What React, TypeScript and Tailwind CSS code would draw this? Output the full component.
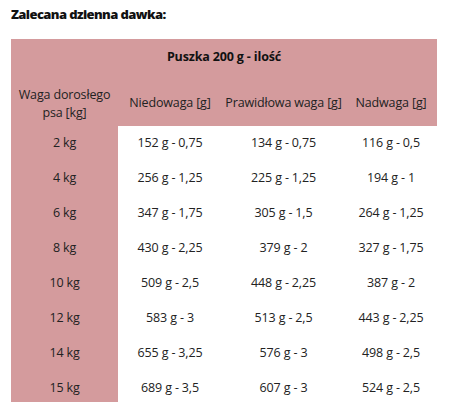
import React from 'react';

const rows: [string, string, string, string][] = [
  ['2 kg', '152 g - 0,75', '134 g - 0,75', '116 g - 0,5'],
  ['4 kg', '256 g - 1,25', '225 g - 1,25', '194 g - 1'],
  ['6 kg', '347 g - 1,75', '305 g - 1,5', '264 g - 1,25'],
  ['8 kg', '430 g - 2,25', '379 g - 2', '327 g - 1,75'],
  ['10 kg', '509 g - 2,5', '448 g - 2,25', '387 g - 2'],
  ['12 kg', '583 g - 3', '513 g - 2,5', '443 g - 2,25'],
  ['14 kg', '655 g - 3,25', '576 g - 3', '498 g - 2,5'],
  ['15 kg', '689 g - 3,5', '607 g - 3', '524 g - 2,5'],
];

export default function App() {
  return (
    <div className="w-[450px] h-[402px] overflow-hidden bg-white pl-[11px] pt-[6px] text-[#222] font-['Open_Sans',sans-serif]">
      <h2 className="text-[13px] leading-[16px] font-black text-[#111] tracking-[-0.6px]">
        Zalecana dzienna dawka:
      </h2>

      <table className="mt-[17px] w-[426px] table-fixed border-collapse text-[12.5px] tracking-[-0.15px] text-center">
        <colgroup>
          <col className="w-[107px]" />
          <col className="w-[104px]" />
          <col className="w-[123px]" />
          <col />
        </colgroup>
        <thead className="bg-[#d49b9d]">
          <tr className="h-[31px]">
            <th colSpan={4} className="pt-[6px] font-bold text-[#111]">
              Puszka 200 g - ilość
            </th>
          </tr>
          <tr className="h-[56px]">
            <th className="font-normal leading-[18px] pt-[12px]">
              Waga dorosłego
              <br />
              psa [kg]
            </th>
            <th className="font-normal pt-[10px]">Niedowaga [g]</th>
            <th className="font-normal pt-[10px]">Prawidłowa waga [g]</th>
            <th className="font-normal pt-[10px]">Nadwaga [g]</th>
          </tr>
        </thead>
        <tbody>
          {rows.map((r) => (
            <tr key={r[0]} className="h-[35px]">
              <td className="bg-[#d49b9d]">{r[0]}</td>
              <td>{r[1]}</td>
              <td>{r[2]}</td>
              <td>{r[3]}</td>
            </tr>
          ))}
        </tbody>
      </table>
    </div>
  );
}
